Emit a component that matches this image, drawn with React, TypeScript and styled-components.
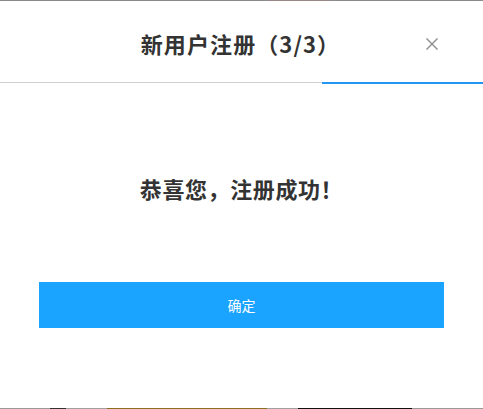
import React, { FC } from 'react'
import styled, { createGlobalStyle } from 'styled-components'

const GlobalStyle = createGlobalStyle`
  html, body {
    margin: 0;
    padding: 0;
    background: #fff;
  }
  body {
    font-family: "Noto Sans CJK SC", "Liberation Sans", sans-serif;
  }
`;

const App: FC = () => {
  return (
    <>
      <GlobalStyle />
      <Page>
        <TopEdge />
        <Dialog>
          <Header>
            <Title>{"新用户注册（3/3）"}</Title>
            <CloseButton aria-label="close">
              <svg width="14" height="14" viewBox="0 0 14 14">
                <path d="M1.5 1.5 L12.5 12.5 M12.5 1.5 L1.5 12.5" stroke="#8c8c8c" strokeWidth="1.4" fill="none" />
              </svg>
            </CloseButton>
          </Header>
          <Progress>
            <ProgressFill />
          </Progress>
          <Body>
            <Message>{"恭喜您，注册成功！"}</Message>
            <ConfirmButton>{"确定"}</ConfirmButton>
          </Body>
        </Dialog>
        <BottomEdge />
      </Page>
    </>
  );
};

export default App;

const Page = styled.div`
  width: 483px;
  height: 409px;
  display: flex;
  flex-direction: column;
  overflow: hidden;
`;

const TopEdge = styled.div`
  height: 1px;
  flex-shrink: 0;
  background: linear-gradient(to right, #8a8a8a 0, #8a8a8a 268px, #9a8888 268px, #9a8888 330px, #8a8a8a 330px);
`;

const BottomEdge = styled.div`
  height: 1px;
  flex-shrink: 0;
  background: linear-gradient(
    to right,
    #9a9a9a 0, #9a9a9a 50px,
    #333 50px, #333 66px,
    #a0a0a0 66px, #a0a0a0 107px,
    #8a7020 107px, #8a7020 267px,
    #a0a0a0 267px, #a0a0a0 298px,
    #111 298px, #111 412px,
    #9a9a9a 412px
  );
`;

const Dialog = styled.div`
  flex: 1;
  display: flex;
  flex-direction: column;
  background: #fff;
`;

const Header = styled.div`
  height: 81px;
  display: flex;
  align-items: center;
  justify-content: center;
  position: relative;
`;

const Title = styled.div`
  font-size: 22px;
  font-weight: bold;
  color: #333;
  letter-spacing: 1.1px;
  margin-left: -2px;
  margin-top: 2px;
`;

const CloseButton = styled.div`
  position: absolute;
  right: 44px;
  top: 36px;
  width: 14px;
  height: 14px;
  display: flex;
  cursor: pointer;
`;

const Progress = styled.div`
  height: 2px;
  position: relative;
  border-top: 1px solid #cfcfcf;
  box-sizing: border-box;
  display: flex;
  justify-content: flex-end;
`;

const ProgressFill = styled.div`
  width: 161px;
  height: 2px;
  margin-top: -1px;
  background: #2196f3;
`;

const Body = styled.div`
  display: flex;
  flex-direction: column;
  align-items: center;
  padding: 88px 39px 0;
`;

const Message = styled.div`
  font-size: 22px;
  font-weight: bold;
  color: #333;
  line-height: 32px;
  letter-spacing: 0.6px;
`;

const ConfirmButton = styled.button`
  margin-top: 78px;
  width: 405px;
  height: 46px;
  border: none;
  background: #1aa3ff;
  color: #fff;
  font-family: "Noto Sans CJK SC", sans-serif;
  font-size: 14px;
  cursor: pointer;
`;
